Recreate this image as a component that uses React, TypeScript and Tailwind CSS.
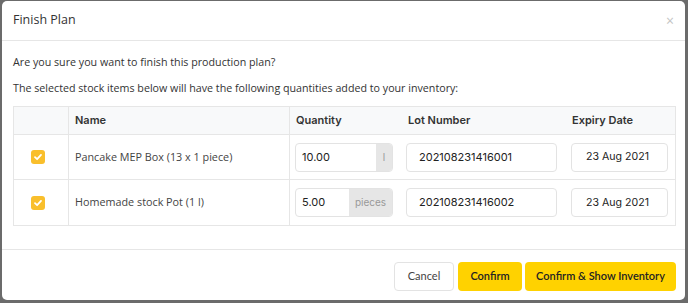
import React from "react";

function Check() {
  return (
    <div className="w-[14px] h-[14px] rounded-[3px] bg-[#f9bf2c] flex items-center justify-center">
      <svg width="10" height="10" viewBox="0 0 10 10">
        <path d="M2 5.2 L4.1 7.2 L8 2.9" stroke="#fff" strokeWidth="1.8" fill="none" strokeLinecap="round" strokeLinejoin="round" />
      </svg>
    </div>
  );
}

const rows = [
  { name: "Pancake MEP Box (13 x 1 piece)", qty: "10.00", unit: "l", unitW: "w-[16px]", lot: "202108231416001", date: "23 Aug 2021" },
  { name: "Homemade stock Pot (1 l)", qty: "5.00", unit: "pieces", unitW: "w-[43px]", lot: "202108231416002", date: "23 Aug 2021" },
];

export default function App() {
  return (
    <div className="w-[688px] h-[303px] bg-[#6b6b6b] pl-[2px] pt-[1px] pr-[3px] pb-[3px]">
      <div className="w-full h-full bg-white rounded-[5px] flex flex-col" style={{ fontFamily: "'Open Sans', sans-serif" }}>
        <div className="h-[40px] border-b border-[#e6e6e6] flex items-center justify-between pl-[11px] pr-[11px]">
          <span className="text-[12.5px] text-[#333]">Finish Plan</span>
          <span className="text-[14px] text-[#c4c4c4] leading-none">×</span>
        </div>
        <div className="px-[11px] pt-[12px]">
          <p className="text-[10.7px] text-[#333] leading-[18px]">Are you sure you want to finish this production plan?</p>
          <p className="text-[10.7px] text-[#333] leading-[18px] mt-[8px]">The selected stock items below will have the following quantities added to your inventory:</p>
          <div className="mt-[9px] border border-[#e6e6e6] w-[663px]" style={{ fontFamily: "Inter, sans-serif" }}>
            <div className="grid grid-cols-[55px_221px_110px_165px_112px] h-[28px] bg-[#f8f9fa] border-b border-[#e6e6e6] text-[11px] font-semibold text-[#333]">
              <div className="border-r border-[#e6e6e6]" />
              <div className="border-r border-[#e6e6e6] flex items-center pl-[6px]">Name</div>
              <div className="flex items-center pl-[6px]">Quantity</div>
              <div className="flex items-center pl-[8px]">Lot Number</div>
              <div className="flex items-center pl-[7px]">Expiry Date</div>
            </div>
            {rows.map((r, i) => (
              <div key={i} className={`grid grid-cols-[55px_221px_110px_165px_112px] h-[45px] ${i === 0 ? "border-b border-[#e6e6e6]" : ""}`}>
                <div className="border-r border-[#e6e6e6] flex items-center pl-[17px]">
                  <Check />
                </div>
                <div className="border-r border-[#e6e6e6] flex items-center pl-[6px] text-[10.8px] text-[#444]" style={{ fontFamily: "'Open Sans', sans-serif" }}>{r.name}</div>
                <div className="flex items-center pl-[5px]">
                  <div className="w-[98px] h-[29px] border border-[#e3e3e3] rounded-[4px] flex overflow-hidden">
                    <div className="flex-1 flex items-center pl-[6px] text-[11px] text-[#222]">{r.qty}</div>
                    <div className={`${r.unitW} bg-[#e6e6e6] flex items-center justify-center text-[10px] text-[#999]`}>{r.unit}</div>
                  </div>
                </div>
                <div className="flex items-center pl-[6px]">
                  <div className="w-[151px] h-[29px] border border-[#e3e3e3] rounded-[4px] flex items-center pl-[12px] text-[11px] text-[#222]">{r.lot}</div>
                </div>
                <div className="flex items-center pl-[6px]">
                  <div className="w-[97px] h-[29px] border border-[#e3e3e3] rounded-[4px] flex items-center pl-[14px] text-[10.6px] text-[#222]">{r.date}</div>
                </div>
              </div>
            ))}
          </div>
        </div>
        <div className="mt-[23px] border-t border-[#e6e6e6] flex justify-end items-start pt-[12px] pr-[9px] gap-[3px]" style={{ fontFamily: "Lato, sans-serif" }}>
          <button className="w-[60px] h-[29px] border border-[#e3e3e3] rounded-[4px] bg-white text-[11px] text-[#444] mr-[1px]">Cancel</button>
          <button className="w-[64px] h-[29px] rounded-[4px] bg-[#ffd200] text-[11px] font-semibold text-[#222]">Confirm</button>
          <button className="w-[151px] h-[29px] rounded-[4px] bg-[#ffd200] text-[11px] font-semibold text-[#222]">Confirm &amp; Show Inventory</button>
        </div>
      </div>
    </div>
  );
}
